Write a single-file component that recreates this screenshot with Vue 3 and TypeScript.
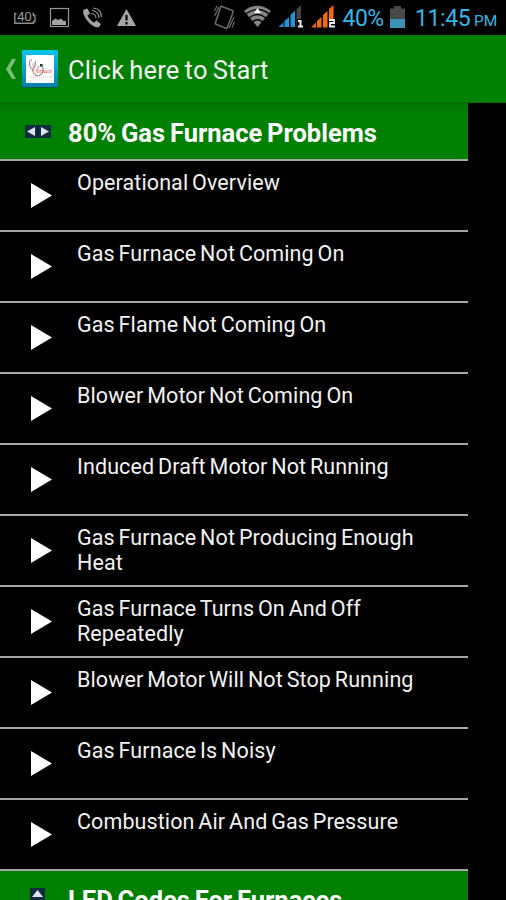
<script setup lang="ts">
const problems: string[] = [
  'Operational Overview',
  'Gas Furnace Not Coming On',
  'Gas Flame Not Coming On',
  'Blower Motor Not Coming On',
  'Induced Draft Motor Not Running',
  'Gas Furnace Not Producing Enough Heat',
  'Gas Furnace Turns On And Off Repeatedly',
  'Blower Motor Will Not Stop Running',
  'Gas Furnace Is Noisy',
  'Combustion Air And Gas Pressure',
]
</script>

<template>
  <div class="screen">
    <header class="status">
      <div class="notifications">
        <svg class="note-icon" width="136" height="35" viewBox="0 0 136 35">
          <path d="M16.500 13.500H14.800V23.300H33.500V21.500H35V15.500H33.500V13.500H32.500" fill="none" stroke="#8d8d8d" stroke-width="1.400" />
          <text x="17" y="21" class="count">40</text>
          <rect x="50.500" y="8.500" width="18" height="18" fill="none" stroke="#969696" stroke-width="1.200" />
          <path d="M52 25V21L55.500 18.500L58 20L61 18.500L63.500 21H66V25Z" fill="#a3a3a3" />
          <path d="M84 9.500L87.500 8.500L90 13.500L87.500 15.500C88.500 18 91.500 21.500 94 22.500L96.500 20.500L101 24L99.500 26.500C97 29 91.500 25.500 88.500 22C84.500 17.500 81.500 11.500 84 9.500Z" fill="#a3a3a3" />
          <path d="M91.500 13.500C94 13.500 96 15.500 96 18M92 10.500C96 10.500 99 13.500 99 18M93 8C98 8 101.500 11.500 101.500 17" fill="none" stroke="#999" stroke-width="1.200" />
          <path d="M126.500 9L136 26H117Z" fill="#a7a7a7" />
          <path d="M126.500 15V20.500M126.500 22V24.500" stroke="#050505" stroke-width="2.200" />
        </svg>
      </div>
      <div class="system">
        <svg width="126" height="35" viewBox="212 0 126 35">
          <g fill="none" stroke="#696969">
            <path d="M222 6.500L232.500 10.500Q233.500 11 233 12.500L227.500 27Q227 28.500 225.500 28L216.500 24.500Q215 24 215.500 22.500L220.500 7.500Q221 6 222 6.500Z" stroke-width="1.600" />
            <path d="M214.500 11L217 6M214.500 16L219 7M229 28L234 17M232 27.500L234.500 21.500" stroke-width="1.200" />
          </g>
          <path d="M257.500 27L244 11Q257.500 .5 271 11Z" fill="#858585" />
          <path d="M245.500 14Q257.500 5 269.500 14M249 18Q257.500 11 266 18M252.500 22Q257.500 17.500 262.500 22" fill="none" stroke="#000" stroke-width="1.300" />
          <path d="M257.500 8L261 13H254Z" fill="#fff" />
          <path d="M278.500 27L283.500 22.500V27ZM284.500 21L289 17V27H284.500ZM290.500 15L295 10.500V27H290.500Z" fill="#2591d7" />
          <path d="M296.500 9L301 5V27H296.500Z" fill="#444" />
          <path d="M311 27.500L316 22.500V27.500ZM317 21L321.500 17V27.500H317ZM323 15L327.500 11V27.500H323ZM329 9L333.500 5V27.500H329Z" fill="#f36a0c" />
          <rect x="297" y="19" width="6" height="9" fill="#000" />
          <rect x="328" y="19" width="8" height="9" fill="#000" />
          <path d="M298 21H300.500V26.500M298 26.500H303" fill="none" stroke="#eee" stroke-width="2" />
          <path d="M329 20H334V23H330V26.500H335" fill="none" stroke="#eee" stroke-width="1.800" />
        </svg>
        <span class="percent">40%</span>
        <svg class="battery" width="15" height="23" viewBox="0 0 15 23">
          <path d="M0 2.500H4V0H11V2.500H15V14H0Z" fill="#484848" />
          <rect y="13" width="15" height="9" fill="#3b92b8" />
        </svg>
        <span class="clock">11:45</span><span class="meridiem">PM</span>
      </div>
    </header>

    <div class="action-bar">
      <svg class="back" width="10" height="20" viewBox="0 0 10 20">
        <path d="M6 0H10L4.500 10L10 20H6L0 10Z" fill="#7bbb7b" />
      </svg>
      <svg class="logo" width="36" height="38" viewBox="0 0 36 38">
        <defs>
          <linearGradient id="frame" x1="0" y1="0" x2="0" y2="1">
            <stop offset="0" stop-color="#08c5f2" />
            <stop offset="1" stop-color="#087da8" />
          </linearGradient>
        </defs>
        <rect y="1" width="36" height="37" rx="1" fill="#075d40" />
        <rect width="36" height="37" rx="1" fill="url(#frame)" />
        <rect x="4" y="5" width="28" height="28" fill="#fff" />
        <path d="M10 10C7 10 7 13 8 16C9 19 10 20 12 18C13 17 14 13 13 11M10.500 19C11 24 14 27 18 25C22 23 22 18 19 15" fill="none" stroke="#777" stroke-width="1" />
        <rect x="18" y="14" width="2.600" height="2.600" fill="#263b48" />
        <text x="13.500" y="23" class="logo-text">furnace</text>
        <path d="M15 17Q17 15 17 17L15 20M11 13Q11 17 12 21" fill="none" stroke="#f07777" stroke-width=".8" />
        <path d="M7 27H30" stroke="#f2a0a0" stroke-width=".8" stroke-dasharray="1 1" />
      </svg>
      <h1>Click here to Start</h1>
    </div>

    <main class="list">
      <section class="group first">
        <svg class="group-icon" width="26" height="13" viewBox="0 0 26 13">
          <rect width="26" height="13" fill="#102c40" />
          <path d="M2 6.500L10 2V11Z" fill="#e0e3ec" />
          <path d="M24 6.500L16 2V11Z" fill="#e0e3ec" />
          <path d="M13 1V12" stroke="#06131d" />
        </svg>
        <h2>80% Gas Furnace Problems</h2>
      </section>
      <ul>
        <li v-for="problem in problems" :key="problem">
          <svg class="play" width="21" height="25" viewBox="0 0 21 25">
            <path d="M0 0L21 12.500L0 25Z" fill="#fff" />
          </svg>
          <span class="label">{{ problem }}</span>
        </li>
      </ul>
      <section class="group next">
        <svg class="group-icon up" width="15" height="26" viewBox="0 0 15 26">
          <rect width="15" height="26" fill="#102c40" />
          <path d="M7.500 2L13 9H2Z" fill="#e0e3ec" />
          <path d="M7.500 24L13 17H2Z" fill="#e0e3ec" />
        </svg>
        <h2>LED Codes For Furnaces</h2>
      </section>
    </main>
  </div>
</template>

<style>
body { margin: 0; background: #000; }
</style>

<style scoped>
.screen {
  width: 506px;
  height: 900px;
  overflow: hidden;
  display: flex;
  flex-direction: column;
  background: #000;
  color: #f2f2f2;
  font-family: Roboto, sans-serif;
}
.status {
  height: 35px;
  flex: none;
  display: flex;
  justify-content: space-between;
  color: #33b5e5;
}
.notifications, .system { display: flex; }
.count { font-size: 13.500px; letter-spacing: -.4px; fill: #999; }
.system { align-items: center; width: 294px; white-space: nowrap; }
.system svg { flex: none; }
.percent { font-size: 23px; letter-spacing: -.5px; margin-left: 4.500px; width: 41.500px; line-height: 35px; padding-top: 2px; }
.battery { margin-left: 6px; margin-top: -1px; }
.clock { font-size: 23px; letter-spacing: -.4px; margin-left: 10px; width: 57px; line-height: 35px; padding-top: 2px; }
.meridiem { font-size: 15.500px; margin-left: 2px; padding-top: 6px; }
.action-bar {
  height: 68px;
  flex: none;
  box-sizing: border-box;
  display: flex;
  align-items: center;
  padding-left: 6px;
  background: #008000;
  border-bottom: 1px solid #006a00;
}
.logo { margin-left: 6px; margin-top: 1px; }
.logo-text { font-family: "Liberation Serif", serif; font-size: 5.500px; font-style: italic; fill: #e33; }
h1 { margin: 2px 0 0 10px; font-size: 25.500px; font-weight: 400; line-height: 30px; letter-spacing: .2px; word-spacing: -1.500px; white-space: nowrap; }
.list { width: 468px; }
.group {
  height: 58px;
  box-sizing: border-box;
  display: flex;
  align-items: center;
  background: #008000;
  border-bottom: 2px solid #a6a6a6;
}
.first { background: linear-gradient(#007400, #008000 10px); }
.group-icon { flex: none; margin-left: 25px; }
h2 { margin: 3px 0 0 17px; color: #fff; font-size: 25.500px; line-height: 30px; font-weight: 700; word-spacing: -1.500px; white-space: nowrap; }
ul { list-style: none; margin: 0; padding: 0; }
li {
  height: 71px;
  box-sizing: border-box;
  display: flex;
  border-bottom: 2px solid #a6a6a6;
}
.play { flex: none; margin: 22px 25px 0 31px; }
.label { width: 360px; padding-top: 9px; font-size: 21.500px; line-height: 25px; letter-spacing: .1px; word-spacing: -1.600px; }
.next { align-items: flex-start; }
.up { margin: 17px 5px 0 30px; }
.next h2 { margin-top: 14px; margin-left: 18px; }
</style>
